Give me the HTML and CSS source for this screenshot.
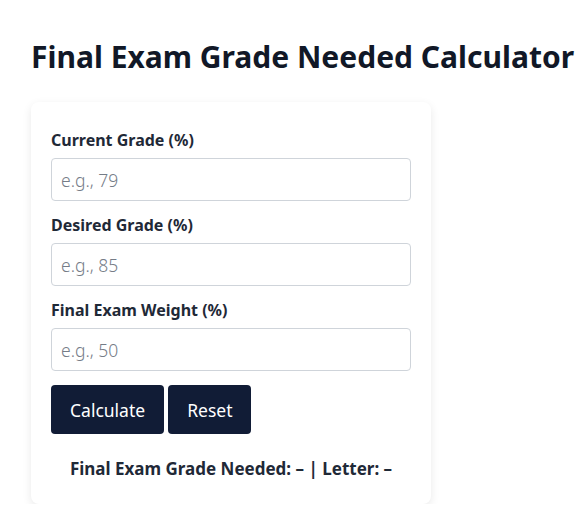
FILE: index.html
```html
<!DOCTYPE html>
<html lang="en">
<head>
<meta charset="utf-8">
<title>Final Exam Grade Needed Calculator</title>
<link rel="stylesheet" href="styles.css">
</head>
<body>
<div class="page">
  <h1 class="title">Final Exam Grade Needed Calculator</h1>
  <div class="card">
    <div class="field">
      <label class="label" for="cur">Current Grade (%)</label>
      <input class="input" id="cur" type="text" placeholder="e.g., 79">
    </div>
    <div class="field">
      <label class="label" for="des">Desired Grade (%)</label>
      <input class="input" id="des" type="text" placeholder="e.g., 85">
    </div>
    <div class="field">
      <label class="label" for="wt">Final Exam Weight (%)</label>
      <input class="input" id="wt" type="text" placeholder="e.g., 50">
    </div>
    <div class="actions">
      <button class="btn" type="button">Calculate</button>
      <button class="btn" type="button">Reset</button>
    </div>
    <div class="result">Final Exam Grade Needed: – | Letter: –</div>
  </div>
</div>
</body>
</html>
```
FILE: styles.css
```css
* { box-sizing: border-box; }
html, body { margin: 0; padding: 0; background: #ffffff; }
body {
  font-family: "Noto Sans", "Open Sans", "DejaVu Sans", sans-serif;
  color: #1f2937;
}
.page {
  padding: 38px 0 0 31px;
}
.title {
  margin: 0 0 26px 0;
  font-size: 30px;
  line-height: 38px;
  font-weight: 700;
  color: #111827;
  white-space: nowrap;
}
.card {
  width: 400px;
  background: #ffffff;
  border-radius: 8px;
  box-shadow: 0 3px 10px rgba(0, 0, 0, 0.09);
  padding: 28px 20px 25px 20px;
}
.field {
  display: flex;
  flex-direction: column;
  margin-bottom: 14px;
}
.label {
  font-size: 16px;
  font-weight: 700;
  line-height: 20px;
  margin-bottom: 8px;
  color: #1f2937;
}
.input {
  height: 43px;
  width: 360px;
  border: 1px solid #cfd4da;
  border-radius: 4px;
  padding: 0 9px;
  font-family: inherit;
  font-size: 17.5px;
  font-weight: 300;
  color: #111827;
  background: #fff;
}
.input::placeholder { color: #757c87; }
.actions {
  display: flex;
  gap: 4px;
  margin-top: 2px;
}
.btn {
  height: 49px;
  padding: 0 19px;
  background: #111c36;
  color: #ffffff;
  border: none;
  border-radius: 4px;
  font-family: inherit;
  font-size: 17.5px;
}
.result {
  margin-top: 25px;
  text-align: center;
  font-size: 17px;
  font-weight: 700;
  line-height: 20px;
  color: #1f2937;
}
```
